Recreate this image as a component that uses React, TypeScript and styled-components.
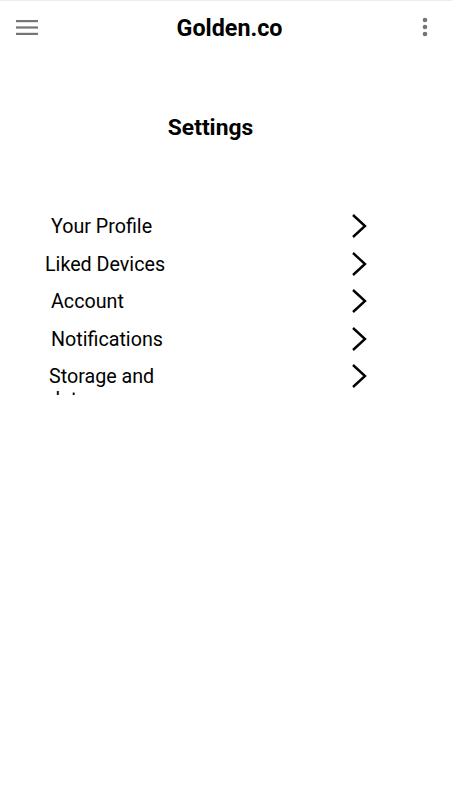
import React from "react";
import styled, { createGlobalStyle } from "styled-components";

const GlobalStyle = createGlobalStyle`
  html, body {
    margin: 0;
    padding: 0;
    background: #ffffff;
    font-family: Roboto, "Noto Sans", "Liberation Sans", sans-serif;
  }
`;

const Page = styled.div`
  width: 452px;
  min-height: 800px;
  background: #ffffff;
  display: flex;
  flex-direction: column;
`;

const AppBar = styled.header`
  height: 54px;
  border-top: 1px solid #ececec;
  display: grid;
  grid-template-columns: 60px 1fr 60px;
  align-items: center;
`;

const MenuButton = styled.div`
  padding-left: 16px;
  margin-top: -2px;
  display: flex;
  align-items: center;
`;

const MoreButton = styled.div`
  display: flex;
  justify-content: flex-end;
  padding-right: 24px;
  margin-top: -2px;
`;

const AppTitle = styled.h1`
  margin: 0;
  padding-left: 7px;
  font-size: 23.3px;
  line-height: 28px;
  font-weight: 700;
  color: #000;
  text-align: center;
`;

const SectionTitle = styled.h2`
  margin: 60px 0 0;
  padding-right: 31px;
  font-size: 22.8px;
  line-height: 26px;
  font-weight: 700;
  color: #000;
  text-align: center;
`;

const List = styled.ul`
  list-style: none;
  margin: 74px 0 0;
  padding: 0;
  display: flex;
  flex-direction: column;
  gap: 7.5px;
`;

const Row = styled.li`
  display: grid;
  grid-template-columns: 1fr auto;
  align-items: start;
  padding-right: 85px;
`;

const Label = styled.span<{ $indent: number }>`
  margin-left: ${(p) => p.$indent}px;
  width: 130px;
  height: 30px;
  overflow: hidden;
  font-size: 19.7px;
  line-height: 23px;
  color: #000;
`;

const Chevron = styled.svg`
  margin-top: -2px;
  display: block;
`;

const HamburgerIcon = () => (
  <svg width="22" height="16" viewBox="0 0 22 16">
    <rect x="0" y="1" width="22" height="2.2" fill="#757575" />
    <rect x="0" y="7.4" width="22" height="2.2" fill="#757575" />
    <rect x="0" y="13.8" width="22" height="2.2" fill="#757575" />
  </svg>
);

const DotsIcon = () => (
  <svg width="6" height="20" viewBox="0 0 6 20">
    <circle cx="3" cy="3" r="2.3" fill="#757575" />
    <circle cx="3" cy="10" r="2.3" fill="#757575" />
    <circle cx="3" cy="17" r="2.3" fill="#757575" />
  </svg>
);

const items: { label: string; indent: number }[] = [
  { label: "Your Profile", indent: 51 },
  { label: "Liked Devices", indent: 45 },
  { label: "Account", indent: 51 },
  { label: "Notifications", indent: 51 },
  { label: "Storage and data", indent: 49 },
];

export default function App() {
  return (
    <Page>
      <GlobalStyle />
      <AppBar>
        <MenuButton>
          <HamburgerIcon />
        </MenuButton>
        <AppTitle>Golden.co</AppTitle>
        <MoreButton>
          <DotsIcon />
        </MoreButton>
      </AppBar>
      <SectionTitle>Settings</SectionTitle>
      <List>
        {items.map((it) => (
          <Row key={it.label}>
            <Label $indent={it.indent}>{it.label}</Label>
            <Chevron width="16" height="26" viewBox="0 0 16 26">
              <polyline
                points="2,2 14,13 2,24"
                fill="none"
                stroke="#000"
                strokeWidth="2.4"
                strokeLinejoin="miter"
              />
            </Chevron>
          </Row>
        ))}
      </List>
    </Page>
  );
}
